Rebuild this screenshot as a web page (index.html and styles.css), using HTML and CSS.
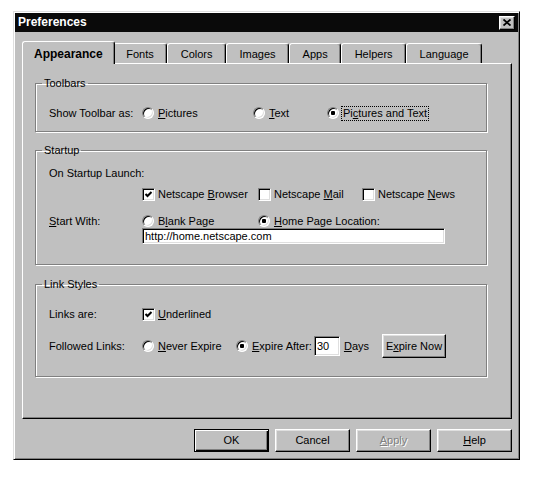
FILE: index.html
```html
<!DOCTYPE html>
<html lang="en">
<head>
    <meta charset="UTF-8">
    <meta name="viewport" content="width=device-width, initial-scale=1.0">
    <title>Preferences</title>
    <link rel="stylesheet" href="styles.css">
</head>
<body>
    <div class="window">
        <div class="titlebar">
            <span class="title">Preferences</span>
            <button class="close" aria-label="Close">
                <svg width="8" height="7" viewBox="0 0 8 7"><path d="M0.5 0.5 L7.5 6.5 M7.5 0.5 L0.5 6.5" stroke="#000" stroke-width="1.8" fill="none"/></svg>
            </button>
        </div>

        <div class="tabs">
            <div class="tab active">Appearance</div>
            <div class="tab">Fonts</div>
            <div class="tab">Colors</div>
            <div class="tab">Images</div>
            <div class="tab">Apps</div>
            <div class="tab">Helpers</div>
            <div class="tab">Language</div>
        </div>

        <div class="panel">
            <fieldset class="group group-toolbars">
                <legend>Toolbars</legend>
                <div class="row row-toolbar">
                    <span>Show Toolbar as:</span>
                    <label class="opt"><span class="radio"></span><span><u>P</u>ictures</span></label>
                    <label class="opt"><span class="radio"></span><span><u>T</u>ext</span></label>
                    <label class="opt"><span class="radio checked"></span><span class="focus">Pi<u>c</u>tures and Text</span></label>
                </div>
            </fieldset>

            <fieldset class="group group-startup">
                <legend>Startup</legend>
                <div class="row row-launch-title">
                    <span>On Startup Launch:</span>
                </div>
                <div class="row row-launch">
                    <span></span>
                    <label class="opt opt-check"><span class="check checked"><svg width="9" height="9" viewBox="0 0 9 9"><path d="M1.5 4 L3.5 6 L7.5 2" stroke="#000" stroke-width="2" fill="none"/></svg></span><span>Netscape <u>B</u>rowser</span></label>
                    <label class="opt opt-check"><span class="check"></span><span>Netscape <u>M</u>ail</span></label>
                    <label class="opt opt-check"><span class="check"></span><span>Netscape <u>N</u>ews</span></label>
                </div>
                <div class="row row-start">
                    <span><u>S</u>tart With:</span>
                    <label class="opt"><span class="radio"></span><span>B<u>l</u>ank Page</span></label>
                    <label class="opt"><span class="radio checked"></span><span><u>H</u>ome Page Location:</span></label>
                </div>
                <div class="row row-url">
                    <span></span>
                    <input class="field field-url" type="text" value="http://home.netscape.com">
                </div>
            </fieldset>

            <fieldset class="group group-links">
                <legend>Link Styles</legend>
                <div class="row row-links">
                    <span>Links are:</span>
                    <label class="opt opt-check"><span class="check checked"><svg width="9" height="9" viewBox="0 0 9 9"><path d="M1.5 4 L3.5 6 L7.5 2" stroke="#000" stroke-width="2" fill="none"/></svg></span><span><u>U</u>nderlined</span></label>
                </div>
                <div class="row row-follow">
                    <span>Followed Links:</span>
                    <label class="opt"><span class="radio"></span><span><u>N</u>ever Expire</span></label>
                    <div class="expire">
                        <label class="opt"><span class="radio checked"></span><span><u>E</u>xpire After:</span></label>
                        <input class="field field-days" type="text" value="30">
                        <span class="days"><u>D</u>ays</span>
                        <button class="btn btn-expire">E<u>x</u>pire Now</button>
                    </div>
                </div>
            </fieldset>
        </div>

        <div class="buttons">
            <button class="btn btn-default">OK</button>
            <button class="btn">Cancel</button>
            <button class="btn disabled"><u>A</u>pply</button>
            <button class="btn"><u>H</u>elp</button>
        </div>
    </div>
</body>
</html>
```

FILE: styles.css
```css
body {
    margin: 0;
    background: #fff;
    font-family: "Liberation Sans", Arial, sans-serif;
    font-size: 11px;
    line-height: 13px;
    color: #000;
}
.window {
    box-sizing: border-box;
    width: 507px;
    height: 449px;
    margin: 11px 0 0 13px;
    padding: 1px;
    background: #c0c0c0;
    border: 1px solid;
    border-color: #dfdfdf #000 #000 #dfdfdf;
    box-shadow: inset 1px 1px #fff, inset -1px -1px #808080;
}
.titlebar {
    display: flex;
    align-items: center;
    justify-content: space-between;
    height: 19px;
    padding: 0 3px;
    background: #0a0a0a;
}
.title {
    color: #fff;
    font-weight: bold;
    font-size: 12px;
}
.close {
    box-sizing: border-box;
    display: flex;
    align-items: center;
    justify-content: center;
    width: 16px;
    height: 14px;
    padding: 0;
    background: #c0c0c0;
    border: 1px solid;
    border-color: #fff #000 #000 #fff;
    box-shadow: inset -1px -1px #808080, inset 1px 1px #dfdfdf;
}
.tabs {
    display: flex;
    align-items: flex-end;
    height: 22px;
    margin-top: 9px;
    padding-left: 9px;
}
.tab {
    box-sizing: border-box;
    height: 20px;
    padding: 4px 12.5px 0;
    background: #c0c0c0;
    border-top: 1px solid #fff;
    border-left: 1px solid #fff;
    border-right: 1px solid #000;
    border-radius: 3px 3px 0 0;
    box-shadow: inset -1px 0 #808080;
}
.tab.active {
    position: relative;
    z-index: 1;
    height: 23px;
    margin: 0 -2px -1px;
    padding: 6px 11px 0;
    font-size: 12px;
    font-weight: bold;
}
.panel {
    box-sizing: border-box;
    width: 490px;
    height: 356px;
    margin-left: 7px;
    padding: 13px 24px 0 12px;
    border: 1px solid;
    border-color: #fff #000 #000 #fff;
    box-shadow: inset -1px -1px #808080;
}
.group {
    min-width: 0;
    margin: 0;
    padding: 0 6px;
    border: 1px solid #808080;
    box-shadow: inset 1px 1px #fff, 1px 1px #fff;
}
.group legend {
    padding: 0 2px;
    line-height: 13px;
}
.group-toolbars {
    padding-top: 13px;
    padding-bottom: 8px;
}
.group-startup {
    margin-top: 12px;
    padding-top: 8px;
    padding-bottom: 20px;
}
.group-links {
    margin-top: 13px;
    padding-top: 15px;
    padding-bottom: 18px;
}
.row {
    display: grid;
    align-items: center;
    height: 16px;
    margin-left: 7px;
}
.row-toolbar {
    grid-template-columns: 93px 111px 74px auto;
    height: 20px;
}
.row-launch {
    grid-template-columns: 93px 116px 104px auto;
    margin-top: 5px;
}
.row-start {
    grid-template-columns: 93px 116px auto;
    height: 14px;
    margin-top: 12px;
}
.row-url {
    grid-template-columns: 93px auto;
}
.row-links {
    grid-template-columns: 93px auto;
}
.row-follow {
    grid-template-columns: 93px 94px auto;
    height: 24px;
    margin-top: 12px;
}
.opt {
    display: flex;
    align-items: center;
    gap: 4px;
}
.opt-check {
    gap: 3px;
}
.radio {
    position: relative;
    box-sizing: border-box;
    width: 12px;
    height: 12px;
    border-radius: 50%;
    background: #fff;
    border: 1px solid;
    border-color: #808080 #fff #fff #808080;
    box-shadow: inset 1px 1px #000, inset -1px -1px #dfdfdf;
}
.radio.checked::after {
    content: "";
    position: absolute;
    left: 3px;
    top: 3px;
    width: 4px;
    height: 4px;
    border-radius: 1px;
    background: #000;
}
.check {
    box-sizing: border-box;
    display: flex;
    align-items: center;
    justify-content: center;
    width: 13px;
    height: 13px;
    background: #fff;
    border: 1px solid;
    border-color: #808080 #fff #fff #808080;
    box-shadow: inset 1px 1px #000, inset -1px -1px #dfdfdf;
}
.focus {
    padding: 0 1px;
    margin-left: -1px;
    outline: 1px dotted #000;
}
.field {
    box-sizing: border-box;
    margin: 0;
    padding: 0 2px;
    background: #fff;
    font: inherit;
    color: #000;
    border: 1px solid;
    border-color: #808080 #fff #fff #808080;
    box-shadow: inset 1px 1px #000, inset -1px -1px #dfdfdf;
    outline: none;
}
.field-url {
    width: 303px;
    height: 16px;
}
.expire {
    display: flex;
    align-items: center;
}
.field-days {
    width: 26px;
    height: 20px;
    margin-left: 2px;
}
.days {
    margin-left: 4px;
}
.btn {
    box-sizing: border-box;
    width: 75px;
    height: 23px;
    padding: 0;
    background: #c0c0c0;
    font: inherit;
    color: #000;
    border: 1px solid;
    border-color: #fff #000 #000 #fff;
    box-shadow: inset -1px -1px #808080, inset 1px 1px #dfdfdf;
}
.btn-default {
    border-color: #000;
    box-shadow: inset 1px 1px #fff, inset -1px -1px #000, inset -2px -2px #808080;
}
.btn.disabled {
    color: #808080;
    text-shadow: 1px 1px #fff;
}
.btn-expire {
    width: 64px;
    height: 24px;
    margin-left: 13px;
}
.buttons {
    display: flex;
    justify-content: flex-end;
    gap: 6px;
    margin-top: 10px;
    padding-right: 6px;
}
```
